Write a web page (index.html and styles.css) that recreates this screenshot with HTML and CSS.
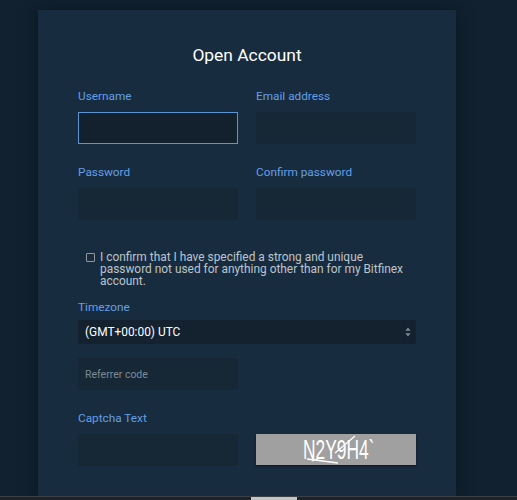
FILE: index.html
```html
<!DOCTYPE html>
<html lang="en">
<head>
  <meta charset="UTF-8">
  <meta name="viewport" content="width=device-width, initial-scale=1">
  <title>Open Account</title>
  <link rel="stylesheet" href="styles.css">
</head>
<body>
  <div class="panel">
    <h1>Open Account</h1>
    <form class="form">
      <div class="row">
        <label class="field">
          <span class="label">Username</span>
          <input type="text" class="input input-active">
        </label>
        <label class="field">
          <span class="label">Email address</span>
          <input type="text" class="input">
        </label>
      </div>
      <div class="row row-second">
        <label class="field">
          <span class="label">Password</span>
          <input type="password" class="input">
        </label>
        <label class="field">
          <span class="label">Confirm password</span>
          <input type="password" class="input">
        </label>
      </div>
      <div class="confirm">
        <span class="checkbox"></span>
        <p>I confirm that I have specified a strong and unique password not used for anything other than for my Bitfinex account.</p>
      </div>
      <span class="label">Timezone</span>
      <div class="select">
        <span>(GMT+00:00) UTC</span>
        <svg class="arrows" width="6" height="10" viewBox="0 0 6 10">
          <path d="M3 0.5 L5.6 3.8 H0.4 Z M3 9.5 L0.4 6.2 H5.6 Z" fill="#7d8a94"/>
        </svg>
      </div>
      <input type="text" class="input referrer" placeholder="Referrer code">
      <div class="row row-captcha">
        <label class="field">
          <span class="label">Captcha Text</span>
          <input type="text" class="input">
        </label>
        <div class="captcha">
          <span>N2Y9H4`</span>
          <svg class="captcha-lines" width="160" height="31" viewBox="0 0 160 31">
            <path d="M51 25 L82 29 M56 27 L67 23 M79 19 L99 2" stroke="#fff" stroke-width="1.3" fill="none"/>
          </svg>
        </div>
      </div>
    </form>
  </div>
  <div class="bottom-bar"><div class="thumb"></div></div>
</body>
</html>
```

FILE: styles.css
```css
html, body {
  height: 500px;
  overflow: hidden;
}
body {
  margin: 0;
  background: #11212f;
  font-family: Roboto, "Liberation Sans", sans-serif;
  position: relative;
}
.panel {
  box-sizing: border-box;
  width: 418px;
  height: 490px;
  margin: 10px 0 0 38px;
  padding: 35px 40px 0;
  background: #182c3f;
  box-shadow: 0 0 14px rgba(5, 14, 22, 0.55);
}
h1 {
  margin: 0 0 23px;
  font-size: 17.4px;
  line-height: 20px;
  font-weight: 400;
  color: #fff;
  text-align: center;
}
.form {
  display: flex;
  flex-direction: column;
  align-items: flex-start;
}
.row {
  display: flex;
  gap: 18px;
}
.row-second {
  margin-top: 20px;
}
.row-captcha {
  margin-top: 20px;
  align-items: flex-end;
}
.field {
  display: flex;
  flex-direction: column;
}
.label {
  display: block;
  height: 16px;
  line-height: 16px;
  margin-bottom: 8px;
  font-size: 11.8px;
  color: #659fe6;
}
.input {
  box-sizing: border-box;
  display: block;
  width: 160px;
  height: 32px;
  padding: 0 6px;
  border: 1px solid #162736;
  background: #162736;
  outline: none;
  font-family: inherit;
  font-size: 10.5px;
  color: #fff;
}
.input::placeholder {
  color: #7b8a95;
  opacity: 1;
}
.input-active {
  border-color: #5a96d6;
  background: #13212e;
}
.confirm {
  display: flex;
  gap: 5px;
  margin: 31px 0 0 8px;
  width: 325px;
}
.checkbox {
  flex: none;
  box-sizing: border-box;
  width: 9px;
  height: 9px;
  margin-top: 2px;
  border: 1px solid #8c98a2;
  border-radius: 1px;
  background: #1b2b39;
}
.confirm p {
  margin: 0;
  font-size: 11.9px;
  line-height: 12px;
  color: #bcc4cb;
}
.confirm + .label {
  margin-top: 12px;
  margin-bottom: 5px;
}
.select {
  box-sizing: border-box;
  display: flex;
  align-items: center;
  justify-content: space-between;
  width: 338px;
  height: 24px;
  padding: 0 5px 0 7px;
  background: #14222f;
  font-size: 11.9px;
  color: #fff;
}
.referrer {
  margin-top: 14px;
}
.captcha {
  position: relative;
  width: 160px;
  height: 31px;
  margin-bottom: 1px;
  background: #a0a0a0;
  box-shadow: 0 1px 2px rgba(0, 0, 0, 0.5);
  color: #fff;
  font-family: "Liberation Sans", sans-serif;
  font-size: 28px;
  line-height: 31px;
  overflow: hidden;
}
.captcha span {
  display: block;
  margin-left: 47px;
  transform: scaleX(0.62);
  transform-origin: left center;
  white-space: nowrap;
}
.captcha-lines {
  position: absolute;
  top: 0;
  left: 0;
}
.bottom-bar {
  position: absolute;
  left: 0;
  right: 0;
  bottom: 0;
  height: 3px;
  background: #1d2226;
  border-top: 1px solid #3b4045;
}
.thumb {
  width: 46px;
  height: 3px;
  margin-left: 251px;
  background: #c4c4c4;
}
```
